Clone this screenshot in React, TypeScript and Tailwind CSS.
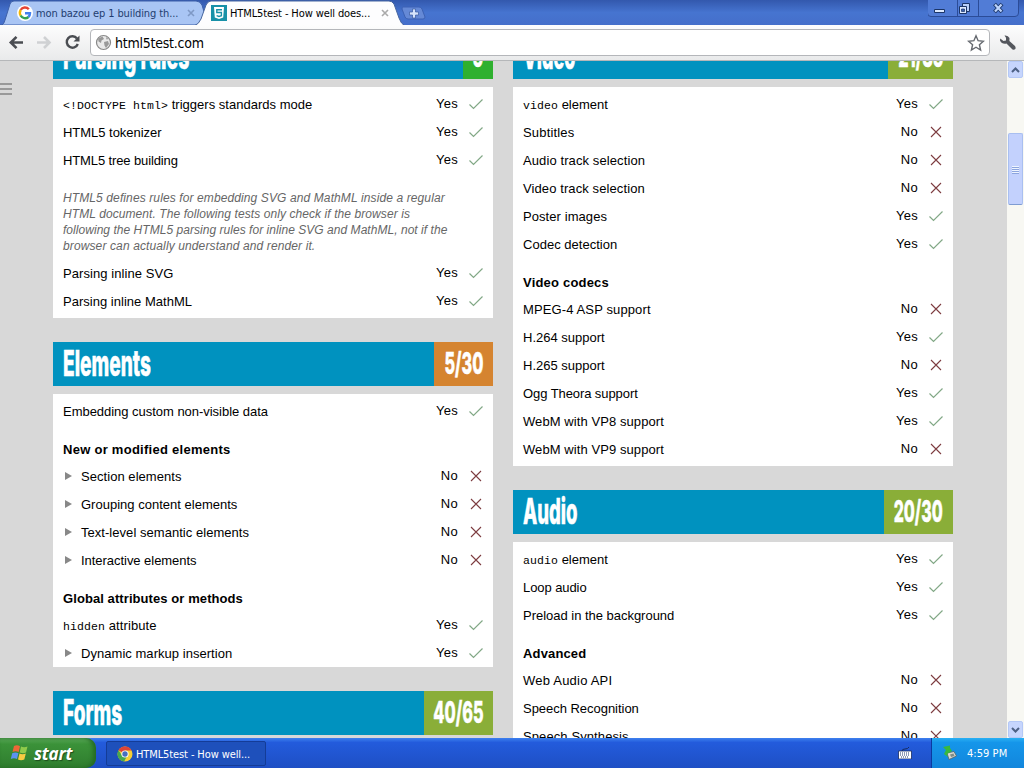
import type { ReactNode } from "react";

interface NoteLine {
  text: string;
  tracking: string;
}

interface Item {
  label?: string;
  code?: string;
  heading?: string;
  note?: NoteLine[];
  ok?: boolean;
  group?: boolean;
  tracking?: string;
}

interface Section {
  title: string;
  titleClass: string;
  score: string;
  scoreClass: string;
  scoreText: string;
  cardClass: string;
  items: Item[];
}

const parsing: Section = {
  title: "Parsing rules",
  titleClass: "scale-x-[0.54]",
  score: "5",
  scoreClass: "w-[30px] bg-[#2fb02f]",
  scoreText: "scale-x-[0.54]",
  cardClass: "pb-[3px]",
  items: [
    { code: "<!DOCTYPE html>", label: " triggers standards mode", ok: true, tracking: "tracking-[0.02px]" },
    { label: "HTML5 tokenizer", ok: true, tracking: "tracking-[-0.03px]" },
    { label: "HTML5 tree building", ok: true, tracking: "tracking-[-0.12px]" },
    {
      note: [
        { text: "HTML5 defines rules for embedding SVG and MathML inside a regular", tracking: "tracking-[0.11px]" },
        { text: "HTML document. The following tests only check if the browser is", tracking: "tracking-[0.08px]" },
        { text: "following the HTML5 parsing rules for inline SVG and MathML, not if the", tracking: "tracking-[0.04px]" },
        { text: "browser can actually understand and render it.", tracking: "tracking-[0.12px]" },
      ],
    },
    { label: "Parsing inline SVG", ok: true, tracking: "tracking-[0.07px]" },
    { label: "Parsing inline MathML", ok: true, tracking: "tracking-[0.02px]" },
  ],
};

const elements: Section = {
  title: "Elements",
  titleClass: "scale-x-[0.53]",
  score: "5/30",
  scoreClass: "w-[59px] bg-[#d58430]",
  scoreText: "scale-x-[0.54]",
  cardClass: "pb-0",
  items: [
    { label: "Embedding custom non-visible data", ok: true, tracking: "tracking-[-0.03px]" },
    { heading: "New or modified elements", tracking: "tracking-[0.27px]" },
    { label: "Section elements", ok: false, group: true, tracking: "tracking-[0.05px]" },
    { label: "Grouping content elements", ok: false, group: true, tracking: "tracking-[0.01px]" },
    { label: "Text-level semantic elements", ok: false, group: true, tracking: "tracking-[0.04px]" },
    { label: "Interactive elements", ok: false, group: true, tracking: "tracking-[-0.04px]" },
    { heading: "Global attributes or methods", tracking: "tracking-[0.08px]" },
    { code: "hidden", label: " attribute", ok: true, tracking: "tracking-[0.1px]" },
    { label: "Dynamic markup insertion", ok: true, group: true, tracking: "tracking-[0.04px]" },
  ],
};

const forms: Section = {
  title: "Forms",
  titleClass: "scale-x-[0.53]",
  score: "40/65",
  scoreClass: "w-[69px] bg-[#8aae38]",
  scoreText: "scale-x-[0.54]",
  cardClass: "pb-0",
  items: [],
};

const video: Section = {
  title: "Video",
  titleClass: "scale-x-[0.5]",
  score: "21/35",
  scoreClass: "w-[65px] bg-[#8aae38]",
  scoreText: "scale-x-[0.54]",
  cardClass: "pb-[3px]",
  items: [
    { code: "video", label: " element", ok: true, tracking: "tracking-[0px]" },
    { label: "Subtitles", ok: false, tracking: "tracking-[0.17px]" },
    { label: "Audio track selection", ok: false, tracking: "tracking-[0.1px]" },
    { label: "Video track selection", ok: false, tracking: "tracking-[0.1px]" },
    { label: "Poster images", ok: true, tracking: "tracking-[0.07px]" },
    { label: "Codec detection", ok: true, tracking: "tracking-[0.02px]" },
    { heading: "Video codecs", tracking: "tracking-[0.2px]" },
    { label: "MPEG-4 ASP support", ok: false, tracking: "tracking-[0.12px]" },
    { label: "H.264 support", ok: true, tracking: "tracking-[0px]" },
    { label: "H.265 support", ok: false, tracking: "tracking-[0px]" },
    { label: "Ogg Theora support", ok: true, tracking: "tracking-[-0.08px]" },
    { label: "WebM with VP8 support", ok: true, tracking: "tracking-[0.08px]" },
    { label: "WebM with VP9 support", ok: false, tracking: "tracking-[0.08px]" },
  ],
};

const audio: Section = {
  title: "Audio",
  titleClass: "scale-x-[0.515]",
  score: "20/30",
  scoreClass: "w-[69px] bg-[#8aae38]",
  scoreText: "scale-x-[0.53]",
  cardClass: "pb-0",
  items: [
    { code: "audio", label: " element", ok: true, tracking: "tracking-[0px]" },
    { label: "Loop audio", ok: true, tracking: "tracking-[-0.08px]" },
    { label: "Preload in the background", ok: true, tracking: "tracking-[-0.02px]" },
    { heading: "Advanced", tracking: "tracking-[0.15px]" },
    { label: "Web Audio API", ok: false, tracking: "tracking-[0.22px]" },
    { label: "Speech Recognition", ok: false, tracking: "tracking-[-0.03px]" },
    { label: "Speech Synthesis", ok: false, tracking: "tracking-[0.1px]" },
  ],
};

function Mark({ ok }: { ok: boolean }) {
  return (
    <svg width="16" height="14" viewBox="0 0 16 14" fill="none" className="ml-[10px] shrink-0">
      {ok ? (
        <path d="M1.5 7.5 L5.5 11.5 L14.5 2.5" stroke="#82a886" strokeWidth="1.2" />
      ) : (
        <path d="M3 2 L13 12 M13 2 L3 12" stroke="#7d3c40" strokeWidth="1.1" />
      )}
    </svg>
  );
}

function Row({ item }: { item: Item }) {
  if (item.note) {
    return (
      <div className="mt-4 mb-[5px] text-[12px] leading-4 text-[#666] italic">
        {item.note.map((line) => (
          <p key={line.text} className={`whitespace-nowrap ${line.tracking}`}>
            {line.text}
          </p>
        ))}
      </div>
    );
  }
  if (item.heading) {
    return (
      <h3 className={`flex h-[37px] items-end pb-[2px] text-[13px] leading-5 font-bold ${item.tracking}`}>
        {item.heading}
      </h3>
    );
  }
  return (
    <div className="-mr-px flex h-7 items-center text-[13px] whitespace-pre">
      {item.group && (
        <svg width="18" height="10" viewBox="0 0 18 10" className="shrink-0">
          <path d="M2 1 L9 5 L2 9 Z" fill="#888" />
        </svg>
      )}
      <span className={`flex-1 pt-[2px] ${item.tracking}`}>
        {item.code && (
          <code className="font-['Liberation_Mono'] text-[11.5px] tracking-[0.1px]">{item.code}</code>
        )}
        {item.label}
      </span>
      <span className="tracking-[0.3px]">{item.ok ? "Yes" : "No"}</span>
      <Mark ok={!!item.ok} />
    </div>
  );
}

function Panel({ section }: { section: Section }) {
  return (
    <section className="mb-6">
      <header className="flex h-11 bg-[#0092bf] font-['Inter'] font-extrabold whitespace-nowrap text-white [-webkit-text-stroke:0.5px_white]">
        <h2 className="min-w-0 flex-1 pl-[10px] text-[36px] leading-[42px]">
          <span className={`inline-block origin-left ${section.titleClass}`}>{section.title}</span>
        </h2>
        <div className={`flex shrink-0 justify-center text-[30px] leading-[42px] ${section.scoreClass}`}>
          <span className={`shrink-0 ${section.scoreText}`}>{section.score}</span>
        </div>
      </header>
      <div className={`mt-2 bg-white px-[10px] pt-[3px] ${section.cardClass}`}>
        {section.items.map((item, i) => (
          <Row key={i} item={item} />
        ))}
      </div>
    </section>
  );
}

function TabLabel({ children }: { children: ReactNode }) {
  return (
    <span className="pt-[3px] font-['DejaVu_Sans'] text-[11px] tracking-[-0.11px] [font-stretch:condensed]">{children}</span>
  );
}

function TabStrip() {
  return (
    <div className="relative flex h-[25px] bg-linear-to-b from-[#3358ad] via-[#4674d0] to-[#456fca] whitespace-nowrap">
      <svg width="440" height="25" viewBox="0 0 440 25" className="absolute top-0 left-0">
        <path d="M0 25 L2 25 Q4 24 5 20 L10 4 Q11 1 14 1 H196 Q200 1 202 5 L208 25 Z" fill="#a9c5f4" stroke="#3d5fa8" />
        <path d="M194 26 Q199 24 201 19 L206 5 Q208 1 211 1 H389 Q392 1 394 4 L399 18 Q401 24 405 26 Z" fill="#fdfdfe" stroke="#47669f" />
        <path d="M403 7 H419 Q421 7 422 9 L425 17 Q425 19 423 19 H408 Q406 19 405 17 L402 9 Q402 7 403 7 Z" fill="#6589d6" stroke="#3c61b3" />
        <path d="M412.500 9 h3 v3 h3 v3 h-3 v3 h-3 v-3 h-3 v-3 h3 Z" fill="#d6e4fb" stroke="#37599f" strokeWidth="0.7" />
      </svg>
      <div className="relative flex w-[202px] items-center pl-[17px] text-[#1f3d70]">
        <svg width="16" height="16" viewBox="0 0 16 16" className="mr-[3px] rounded-full bg-white">
          <g fill="none" strokeWidth="2.4">
            <path d="M3.600 5 A5 5 0 0 1 11.800 4.300" stroke="#e54335" />
            <path d="M3.700 10.600 A5.200 5.200 0 0 1 3.700 5" stroke="#f6b704" />
            <path d="M11.500 12 A5.200 5.200 0 0 1 3.600 10.500" stroke="#34a353" />
            <path d="M8 8.200 H13 Q13 10.500 11.400 12" stroke="#4280ef" />
          </g>
        </svg>
        <TabLabel>mon bazou ep 1 building th...</TabLabel>
        <svg width="8" height="8" viewBox="0 0 8 8" className="ml-auto mr-[7px]">
          <path d="M1 1 L7 7 M7 1 L1 7" stroke="#7e98c5" strokeWidth="1.6" />
        </svg>
      </div>
      <div className="relative flex w-[194px] items-center pl-[9px] text-black">
        <svg width="16" height="16" viewBox="0 0 16 16" className="mr-[3px]">
          <path d="M0 0 H16 V16 H0 Z" fill="#1891a8" />
          <path d="M3 2 H13 L12.200 12.500 L8 14 L3.800 12.500 Z" fill="#fff" />
          <path d="M11 4.800 H5.800 V7.500 H10.400 V10.700 L8 11.400 L5.600 10.700" fill="none" stroke="#1891a8" strokeWidth="1.4" />
        </svg>
        <TabLabel>HTML5test - How well does...</TabLabel>
        <svg width="8" height="8" viewBox="0 0 8 8" className="ml-auto mr-[7px]">
          <path d="M1 1 L7 7 M7 1 L1 7" stroke="#aaa" strokeWidth="1.6" />
        </svg>
      </div>
      <svg width="96" height="18" viewBox="0 0 96 18" className="ml-auto shrink-0">
        <path d="M0.500 0 V13 Q0.500 16.500 4 16.500 H88 Q91.500 16.500 91.500 13 V0 M30.500 0 V16 M51.500 0 V16" transform="translate(-1 0)" fill="#517cd6" stroke="#2b4c98" />
        <path d="M6.500 9.500 H16.500 V12.500 H6.500 Z" fill="#dce9ff" stroke="#1b3568" />
        <path d="M34.500 3.500 H41.500 V11.500 H34.500 Z" fill="#b9d0fa" stroke="#1b3568" />
        <path d="M31.500 6.500 H38.500 V13.500 H31.500 Z" fill="#dce9ff" stroke="#1b3568" />
        <path d="M33.500 9 H36.500 V11.500 H33.500 Z" fill="#3b61ad" stroke="#1b3568" strokeWidth="0.7" />
        <path d="M66.500 4 L74 12 M74 4 L66.500 12" stroke="#1b3568" strokeWidth="4" />
        <path d="M67 4.500 L73.500 11.500 M73.500 4.500 L67 11.500" stroke="#bcd3fb" strokeWidth="2.200" />
      </svg>
    </div>
  );
}

function Toolbar() {
  return (
    <div className="flex h-9 items-center border-b border-[#b5b7b9] bg-linear-to-b from-[#fdfdfd] to-[#e9eaeb]">
      <svg width="90" height="34" viewBox="0 0 90 34" fill="none" className="shrink-0">
        <path d="M23 16.500 H11 M16.500 10.800 L10.800 16.500 L16.500 22.200" stroke="#4a4d52" strokeWidth="2.6" />
        <path d="M37 16.500 H49 M44 11 L49.500 16.500 L44 22" stroke="#cfd1d3" strokeWidth="2.6" />
        <path d="M77 12.500 A5.700 5.700 0 1 0 77.800 18" stroke="#4a4d52" strokeWidth="2.4" />
        <path d="M79.500 9.500 V15.500 H73.500 Z" fill="#4a4d52" />
      </svg>
      <div className="flex h-[27px] w-[900px] shrink-0 items-center rounded-[4px] border border-[#b4b6ba] bg-white pl-1">
        <svg width="17" height="17" viewBox="0 0 17 17" className="mr-[3px]">
          <circle cx="8.500" cy="8.500" r="7" fill="#e9e9e9" stroke="#888" strokeWidth="1.2" />
          <path d="M3 4.500 L7.500 2.500 L9 5 L6.500 6.500 L6 9 L3.500 7.500 Z M9 8 L13 7 L14 10 L11 14 L9.500 11.500 Z M11 3 L13.500 5 L11.500 5.500 Z" fill="#999" />
        </svg>
        <span className="pt-px font-['DejaVu_Sans'] text-[14px] leading-none tracking-[-0.24px] [font-stretch:condensed]">html5test.com</span>
        <svg width="18" height="18" viewBox="0 0 18 18" fill="none" className="ml-auto mr-1">
          <path d="M9 1.800 L11.100 6.700 L16.400 7.200 L12.400 10.700 L13.600 16 L9 13.200 L4.400 16 L5.600 10.700 L1.600 7.200 L6.900 6.700 Z" stroke="#666a70" strokeWidth="1.4" />
        </svg>
      </div>
      <svg width="18" height="18" viewBox="0 0 18 18" className="ml-[9px]">
        <path d="M5.500 1.500 Q9 1 10.500 4 L10.400 7 L16 12 Q17.500 14.500 15.500 15.500 Q14 16.500 12.500 14.500 L7.500 9.500 Q3 10.500 1 6.500 L1.200 4.500 L4.500 7 L7 6.500 L7 3.800 Z" fill="#54575d" />
      </svg>
    </div>
  );
}

function ScrollButton({ up }: { up?: boolean }) {
  return (
    <div className="flex h-[17px] items-center justify-center rounded-[2px] border border-[#b4c8f6] bg-[#c6d5fd]">
      <svg width="9" height="6" viewBox="0 0 9 6" fill="none">
        <path d={up ? "M1 5 L4.500 1.500 L8 5" : "M1 1 L4.500 4.500 L8 1"} stroke="#4d6185" strokeWidth="2" />
      </svg>
    </div>
  );
}

function Scrollbar() {
  return (
    <div className="flex w-[17px] shrink-0 flex-col bg-[#f8f8f3] pr-px pl-px">
      <ScrollButton up />
      <div className="flex-1 pt-[55px]">
        <div className="flex h-[72px] flex-col items-center justify-center gap-px rounded-[2px] border border-[#a9bff0] border-b-[#7f9cd2] bg-[#c3d1fd]">
          {[0, 1, 2, 3].map((n) => (
            <div key={n} className="h-px w-[7px] bg-[#eef4fe] shadow-[0_1px_0_#8ca5de]" />
          ))}
        </div>
      </div>
      <ScrollButton />
    </div>
  );
}

function Taskbar() {
  return (
    <div className="flex h-[30px] items-stretch bg-linear-to-b from-[#3e80ee] via-[#235bdc] via-15% to-[#1e4fc4]">
      <div className="flex w-[96px] items-center rounded-r-[10px] bg-linear-to-b from-[#5dad5c] via-[#3b9239] via-20% to-[#2f7d2e] pl-[10px] shadow-[inset_-3px_0_4px_#246a24]">
        <svg width="20" height="20" viewBox="0 0 20 20" className="mr-[4px]">
          <path d="M4 3 Q7 1.500 10 3.200 L8.700 9 Q5.500 7.600 2.500 9 Z" fill="#ee6737" />
          <path d="M11 3.600 Q14 5 17.500 3.600 L16 9.500 Q13 10.800 9.700 9.400 Z" fill="#8fca4b" />
          <path d="M2.200 10.200 Q5.500 8.800 8.400 10.200 L7 16 Q4 14.600 0.800 16 Z" fill="#5c92f1" />
          <path d="M9.500 10.600 Q12.500 12 15.800 10.600 L14.300 16.500 Q11 17.900 8 16.500 Z" fill="#f8cb42" />
        </svg>
        <span className="font-['Open_Sans'] text-[17px] leading-none font-bold tracking-[-0.2px] text-white italic [text-shadow:1px_1px_1px_#1c4d1c]">start</span>
      </div>
      <div className="mt-[3px] mb-[2px] ml-[10px] flex w-[160px] items-center rounded-[2px] border border-[#143c97] bg-[#1e50bb] pl-[10px] text-white">
        <svg width="16" height="16" viewBox="0 0 16 16" className="mr-[3px]">
          <circle cx="8" cy="8" r="7.500" fill="#f5cf35" />
          <path d="M8 8 L1.500 4.200 A7.500 7.500 0 0 1 14.700 4.600 H8 Z" fill="#de4436" />
          <path d="M1.500 4.300 A7.500 7.500 0 0 0 7.200 15.500 L10 10 L5 9.500 Z" fill="#47a94b" />
          <circle cx="8" cy="8" r="3.600" fill="#fff" />
          <circle cx="8" cy="8" r="2.700" fill="#466fbd" />
        </svg>
        <TabLabel>HTML5test - How well...</TabLabel>
      </div>
      <svg width="14" height="12" viewBox="0 0 14 12" className="mr-[19px] ml-auto self-center">
        <path d="M4 4 Q4 2 7 2 T11 0" fill="none" stroke="#172c62" />
        <path d="M0.500 4 H13.500 V12 H0.500 Z" fill="#fff" stroke="#172c62" strokeWidth="0.8" />
        <path d="M2 6 H12 M2 8 H12 M3 10 H11" stroke="#233a72" strokeDasharray="1 1" />
      </svg>
      <div className="flex w-[93px] items-center border-l border-[#0b3ba0] bg-linear-to-b from-[#2ab0f3] via-[#1596ea] via-15% to-[#1286dc] pl-[10px] text-white">
        <svg width="15" height="16" viewBox="0 0 15 16" className="mr-[10px]">
          <path d="M5 8 L12 6.500 L14.500 11 L7 14.500 Z" fill="#d7dad2" stroke="#56636a" strokeWidth="0.800" />
          <path d="M8 9.500 L11.500 8.500 L12.500 11 L9 12 Z" fill="#808c85" />
          <path d="M1 2 L8 0.500 L8 3 L10 6 L5 9 L6 12 L2 9 L4 5 Z" fill="#37b93e" />
        </svg>
        <span className="pt-[2px] font-['DejaVu_Sans'] text-[11px] tracking-[0.05px] whitespace-nowrap [font-stretch:condensed]">4:59 PM</span>
      </div>
    </div>
  );
}

export default function App() {
  return (
    <div className="flex h-[768px] w-[1024px] flex-col overflow-hidden bg-[#d8d8d8] font-['Liberation_Sans',sans-serif] text-black">
      <TabStrip />
      <Toolbar />
      <div className="flex min-h-0 flex-1 overflow-hidden">
        <nav className="flex w-[53px] shrink-0 flex-col gap-[3px] pt-[22px]">
          <div className="h-[2px] w-3 bg-[#999]" />
          <div className="h-[2px] w-3 bg-[#999]" />
          <div className="h-[2px] w-3 bg-[#999]" />
        </nav>
        <main className="flex min-w-0 flex-1 gap-5">
          <div className="-mt-[26px] w-[440px] shrink-0">
            <Panel section={parsing} />
            <Panel section={elements} />
            <Panel section={forms} />
          </div>
          <div className="-mt-[26px] w-[440px] shrink-0">
            <Panel section={video} />
            <Panel section={audio} />
          </div>
        </main>
        <Scrollbar />
      </div>
      <Taskbar />
    </div>
  );
}
